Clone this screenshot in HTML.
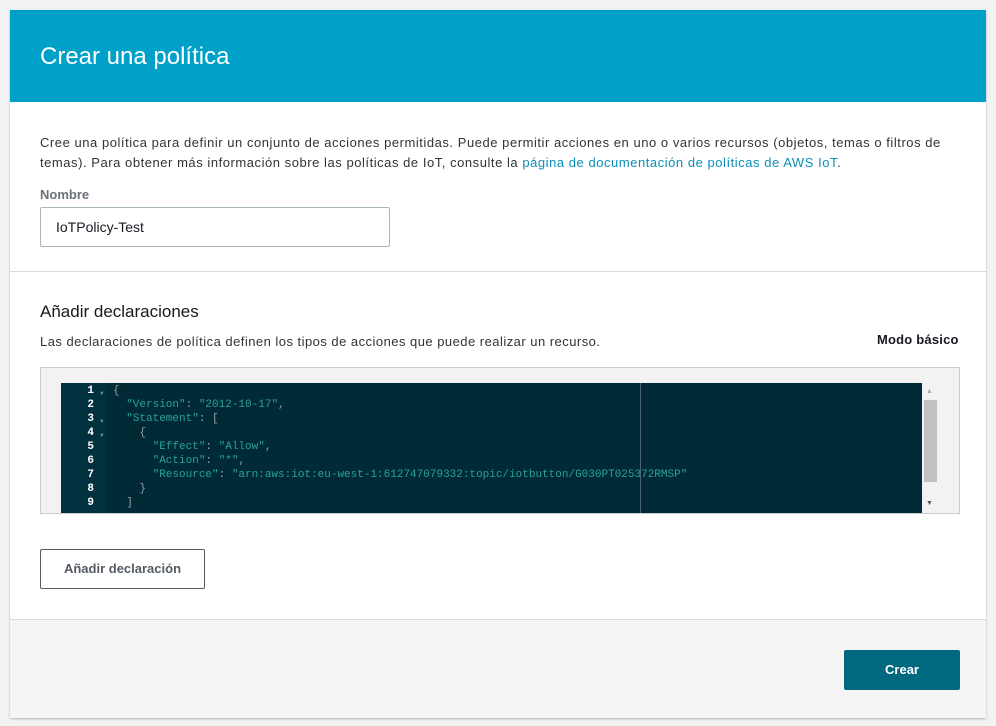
<!DOCTYPE html>
<html><head><meta charset="utf-8"><style>
*{margin:0;padding:0;box-sizing:border-box}
body{width:996px;height:726px;background:#f2f2f2;font-family:"Liberation Sans",sans-serif;position:relative;overflow:hidden;color:#333}
.card{position:absolute;left:10px;top:10px;width:976px;height:708px;background:#fff;box-shadow:0 1px 2px rgba(0,0,0,.25)}
.hdr{height:92px;background:#00a1c9;color:#fff;font-size:24px;padding:33px 0 0 30px}
.abs{position:absolute}
.t{font-size:13px;color:#333;line-height:20px;white-space:nowrap}
a{color:#0a8fb8;text-decoration:none}
.code{position:absolute;left:61px;top:383px;width:861px;height:130px;background:#002b36;overflow:hidden;font-family:"Liberation Mono",monospace;font-size:11px;line-height:14px}
.gut{position:absolute;left:0;top:0;width:46px;height:130px;background:#01313f;color:#fff;font-weight:bold;text-align:right;padding:1px 13px 0 0}
.src{position:absolute;left:52px;top:1px;color:#93a1a1;white-space:pre}
.s{color:#2aa198}
.ar{position:absolute;left:39px;font-size:6px;color:#6a8a94}
</style></head><body>
<div class="card">
<div class="hdr">Crear una política</div>
<div class="abs" style="left:0;top:261px;width:976px;border-top:1px solid #d5dbdb"></div>
<div class="abs" style="left:0;top:609px;width:976px;height:99px;background:#f5f5f5;border-top:1px solid #d5dbdb"></div>
</div>
<div class="abs t" style="left:40px;top:133px;letter-spacing:0.54px">Cree una política para definir un conjunto de acciones permitidas. Puede permitir acciones en uno o varios recursos (objetos, temas o filtros de<br>temas). Para obtener más información sobre las políticas de IoT, consulte la <a>página de documentación de políticas de AWS IoT</a>.</div>
<div class="abs" style="left:40px;top:187px;font-size:13px;font-weight:bold;color:#687078">Nombre</div>
<div class="abs" style="left:40px;top:207px;width:350px;height:40px;border:1px solid #aab7b8;border-radius:2px;font-size:14px;padding:11px 15px;color:#16191f">IoTPolicy-Test</div>
<div class="abs" style="left:40px;top:302px;font-size:17px;color:#16191f">Añadir declaraciones</div>
<div class="abs t" style="left:40px;top:332px;letter-spacing:0.47px">Las declaraciones de política definen los tipos de acciones que puede realizar un recurso.</div>
<div class="abs" style="left:877px;top:332px;font-size:13px;font-weight:bold;color:#16191f;letter-spacing:0.2px">Modo básico</div>
<div class="abs" style="left:40px;top:367px;width:920px;height:147px;background:#f2f2f2;border:1px solid #ccc"></div>
<div class="code">
<div class="gut">1<br>2<br>3<br>4<br>5<br>6<br>7<br>8<br>9</div>
<div class="ar" style="top:4px">▼</div><div class="ar" style="top:32px">▼</div><div class="ar" style="top:46px">▼</div>
<div class="src">{
  <span class="s">"Version"</span>: <span class="s">"2012-10-17"</span>,
  <span class="s">"Statement"</span>: [
    {
      <span class="s">"Effect"</span>: <span class="s">"Allow"</span>,
      <span class="s">"Action"</span>: <span class="s">"*"</span>,
      <span class="s">"Resource"</span>: <span class="s">"arn:aws:iot:eu-west-1:612747079332:topic/iotbutton/G030PT025372RMSP"</span>
    }
  ]</div>
<div class="abs" style="left:579px;top:0;width:1px;height:130px;background:#4a6670"></div>
</div>
<div class="abs" style="left:922px;top:383px;width:16px;height:130px;background:#f2f2f2"></div>
<div class="abs" style="left:924px;top:400px;width:13px;height:82px;background:#c1c1c1"></div>
<div class="abs" style="left:926px;top:388px;font-size:7px;color:#aaa">▲</div>
<div class="abs" style="left:926px;top:500px;font-size:7px;color:#555">▼</div>
<div class="abs" style="left:40px;top:549px;width:165px;height:40px;border:1px solid #545b64;border-radius:2px;font-size:13px;font-weight:bold;color:#545b64;text-align:center;line-height:38px">Añadir declaración</div>
<div class="abs" style="left:844px;top:650px;width:116px;height:40px;background:#00687f;border-radius:2px;font-size:13px;font-weight:bold;color:#fff;text-align:center;line-height:40px">Crear</div>
</body></html>
